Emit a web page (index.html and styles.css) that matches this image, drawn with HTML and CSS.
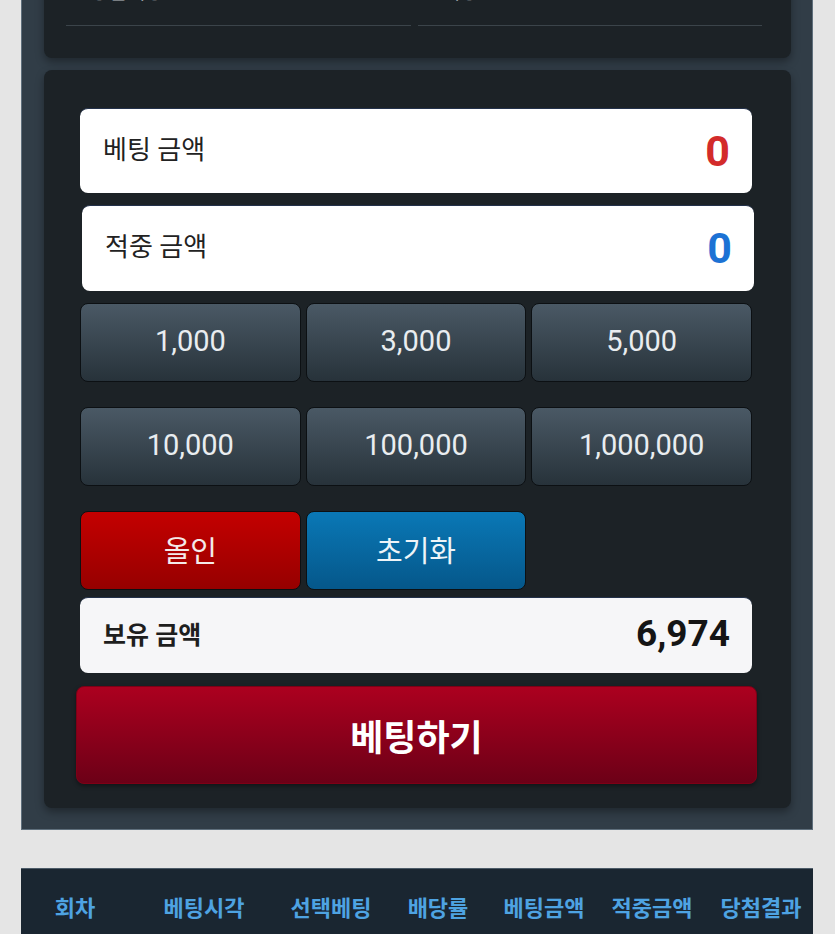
FILE: index.html
```html
<!DOCTYPE html>
<html lang="ko">
<head>
<meta charset="utf-8">
<title>베팅</title>
<link rel="stylesheet" href="styles.css">
</head>
<body>
<div class="wrap">
  <div class="card card-top">
    <div class="info-row">
      <div class="info-cell">당첨예상</div>
      <div class="info-cell">배당</div>
    </div>
  </div>
  <div class="card card-bet">
    <div class="field">
      <span class="field-label">베팅 금액</span>
      <span class="field-value red">0</span>
    </div>
    <div class="field field-second">
      <span class="field-label">적중 금액</span>
      <span class="field-value blue">0</span>
    </div>
    <div class="chips">
      <button class="chip">1,000</button>
      <button class="chip">3,000</button>
      <button class="chip">5,000</button>
      <button class="chip">10,000</button>
      <button class="chip">100,000</button>
      <button class="chip">1,000,000</button>
      <button class="chip chip-red">올인</button>
      <button class="chip chip-blue">초기화</button>
    </div>
    <div class="balance">
      <span class="balance-label">보유 금액</span>
      <span class="balance-value">6,974</span>
    </div>
    <button class="bet-btn">베팅하기</button>
  </div>
</div>
<div class="history">
  <div class="history-head">
    <span>회차</span>
    <span>베팅시각</span>
    <span>선택베팅</span>
    <span>배당률</span>
    <span>베팅금액</span>
    <span>적중금액</span>
    <span>당첨결과</span>
  </div>
</div>
</body>
</html>
```
FILE: styles.css
```css
* { box-sizing: border-box; }
html, body { margin: 0; padding: 0; }
body {
  background: #e5e5e5;
  font-family: Roboto, "Noto Sans CJK KR", sans-serif;
  height: 934px;
  overflow: hidden;
}
.wrap {
  margin: -60px 22px 0 21px;
  background: #313d47;
  padding: 23px 21px 21px 22px;
  border: 1px solid #5f6f7c;
  border-top: none;
}
.card {
  background: #1c2226;
  border-radius: 8px;
  box-shadow: 0 4px 8px rgba(0, 0, 0, 0.35);
}
.card-top {
  padding: 17px 29px 32px 22px;
}
.info-row {
  display: grid;
  grid-template-columns: 1fr 1fr;
  column-gap: 7px;
}
.info-cell {
  font-size: 20px;
  line-height: 24px;
  color: #b9bec2;
  padding: 0 0 21px 24px;
  border-bottom: 1px solid #3b444a;
}
.card-bet {
  margin-top: 12px;
  padding: 38px 39px 24px 36px;
}
.field {
  height: 85px;
  background: #ffffff;
  border-radius: 8px;
  border-top: 1px solid #23314a;
  display: flex;
  align-items: center;
  justify-content: space-between;
  padding: 0 22px 0 23px;
}
.field-second {
  height: 86px;
  margin: 12px -2px 0 2px;
}
.field-label {
  font-size: 26px;
  color: #222;
  margin-bottom: 8px;
}
.field-value {
  font-size: 43px;
  font-weight: 700;
  line-height: 1;
}
.red { color: #d32b2b; }
.blue { color: #1c72d4; }
.chips {
  margin-top: 12px;
  display: grid;
  grid-template-columns: repeat(3, 1fr);
  column-gap: 5px;
  row-gap: 25px;
}
.chip {
  height: 79px;
  border: 1px solid #0c1013;
  border-radius: 8px;
  background: linear-gradient(#4a5965, #27323a);
  color: #e9edf0;
  font-family: Roboto, "Noto Sans CJK KR", sans-serif;
  font-size: 29px;
  padding: 0 0 3px;
}
.chip-red {
  background: linear-gradient(#c40000, #960000);
  color: #f4eaea;
}
.chip-blue {
  background: linear-gradient(#0a78b6, #05578a);
  color: #eef4f8;
}
.balance {
  margin-top: 7px;
  height: 76px;
  background: #f6f6f8;
  border-radius: 8px;
  border-top: 1px solid #23314a;
  display: flex;
  align-items: center;
  justify-content: space-between;
  padding: 0 22px 0 23px;
}
.balance-label {
  font-size: 25px;
  font-weight: 700;
  color: #1e1e1e;
  margin-bottom: 6px;
}
.balance-value {
  font-size: 37px;
  font-weight: 700;
  color: #151515;
  margin-bottom: 4px;
}
.bet-btn {
  display: block;
  width: calc(100% + 9px);
  margin: 13px -5px 0 -4px;
  height: 98px;
  border: 1px solid #7e0016;
  border-radius: 8px;
  background: linear-gradient(#ac001f, #6c0017);
  color: #ffffff;
  font-family: Roboto, "Noto Sans CJK KR", sans-serif;
  font-size: 36px;
  font-weight: 700;
  box-shadow: 0 2px 4px rgba(0, 0, 0, 0.4);
}
.history {
  margin: 38px 22px 0 21px;
  background: #1a2631;
  border-top: 1px solid #4c5b68;
}
.history-head {
  display: grid;
  grid-template-columns: 108px 150px 104px 110px 102px 114px 1fr;
  height: 80px;
  align-items: center;
  padding-bottom: 6px;
}
.history-head span {
  text-align: center;
  color: #4ea3e2;
  font-size: 22px;
  font-weight: 700;
  white-space: nowrap;
}
```
